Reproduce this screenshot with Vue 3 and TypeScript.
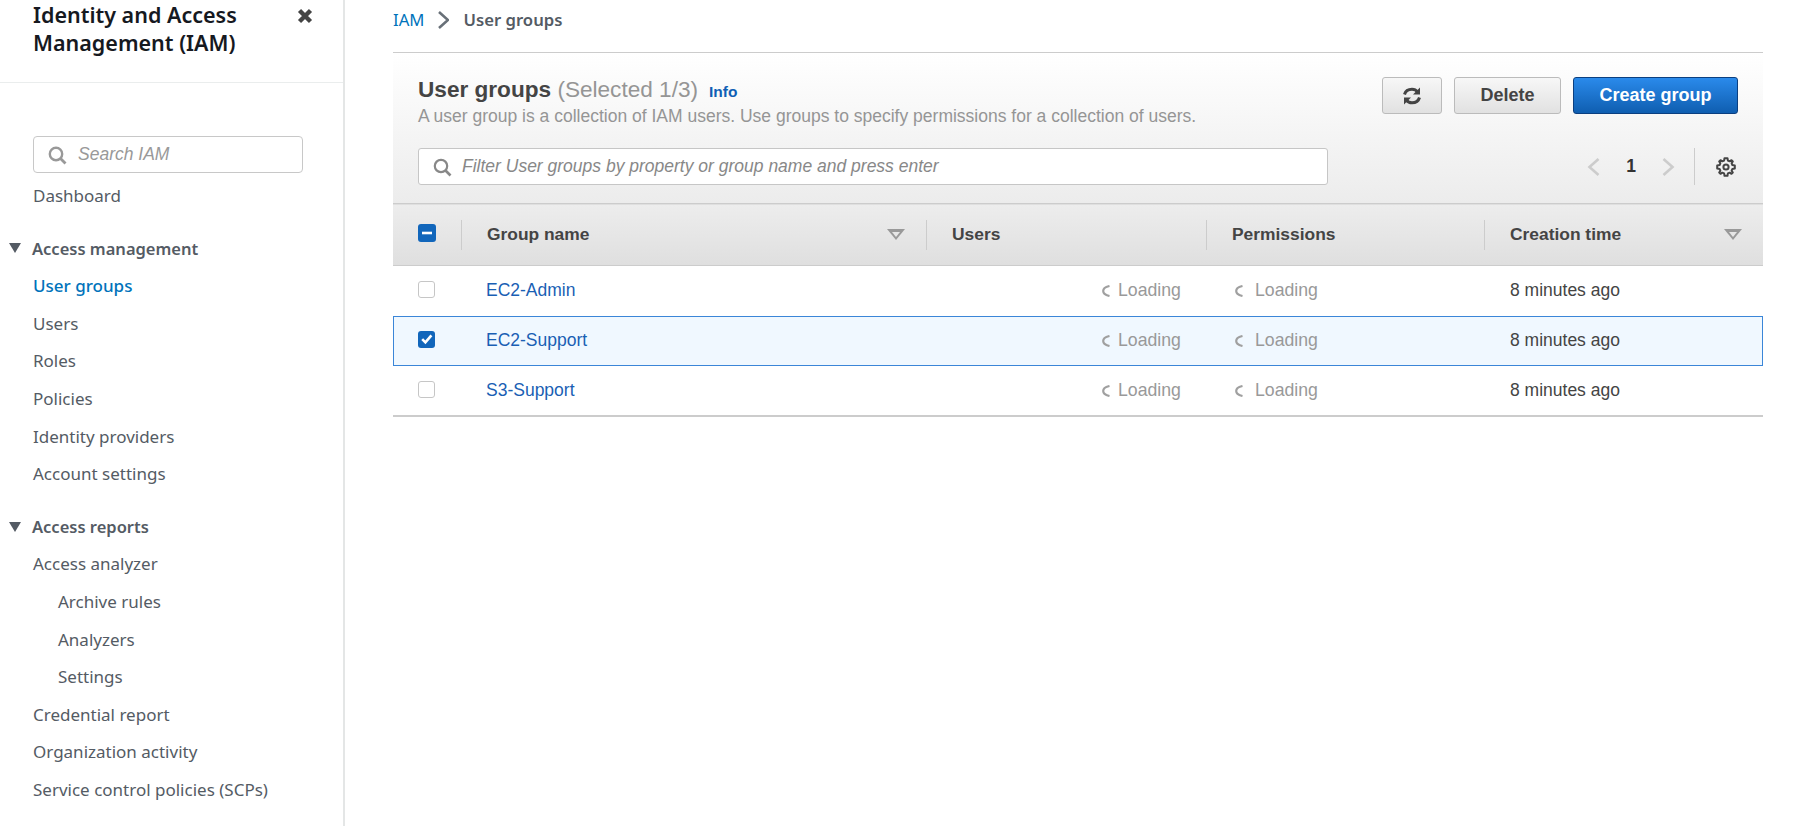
<script setup lang="ts">
interface NavItem {
  label: string
  level?: number
  active?: boolean
}
interface NavSection {
  title: string
  items: NavItem[]
}
const sections: NavSection[] = [
  {
    title: 'Access management',
    items: [
      { label: 'User groups', active: true },
      { label: 'Users' },
      { label: 'Roles' },
      { label: 'Policies' },
      { label: 'Identity providers' },
      { label: 'Account settings' },
    ],
  },
  {
    title: 'Access reports',
    items: [
      { label: 'Access analyzer' },
      { label: 'Archive rules', level: 1 },
      { label: 'Analyzers', level: 1 },
      { label: 'Settings', level: 1 },
      { label: 'Credential report' },
      { label: 'Organization activity' },
      { label: 'Service control policies (SCPs)' },
    ],
  },
]
const groups = [
  { name: 'EC2-Admin', selected: false },
  { name: 'EC2-Support', selected: true },
  { name: 'S3-Support', selected: false },
]
</script>

<template>
  <div class="page">
    <aside class="nav">
      <div class="nav__head">
        <h2 class="nav__title">Identity and Access Management (IAM)</h2>
        <svg class="nav__close" width="18" height="18" viewBox="0 0 18 18">
          <path d="M3.5 3.5l11 11M14.5 3.5l-11 11" stroke="#444" stroke-width="4.4" />
        </svg>
      </div>
      <div class="nav__body">
        <div class="nav__search">
          <svg width="20" height="20" viewBox="0 0 20 20" fill="none" stroke="#999">
            <circle cx="9" cy="9" r="6.2" stroke-width="2.4" />
            <path d="M13.5 13.5l5 5" stroke-width="2.8" />
          </svg>
          <span>Search IAM</span>
        </div>
        <a class="nav__link">Dashboard</a>
        <section v-for="s in sections" :key="s.title" class="nav__section">
          <div class="nav__section-title">
            <i class="nav__caret"></i>
            {{ s.title }}
          </div>
          <a
            v-for="item in s.items"
            :key="item.label"
            class="nav__link"
            :class="{ 'nav__link--active': item.active, 'nav__link--sub': item.level }"
          >{{ item.label }}</a>
        </section>
      </div>
    </aside>

    <main class="main">
      <nav class="crumbs">
        <a>IAM</a>
        <svg width="14" height="20" viewBox="0 0 14 20" fill="none" stroke="#687078" stroke-width="2.6">
          <path d="M4 2l9 8-9 8" />
        </svg>
        <b>User groups</b>
      </nav>

      <div class="panel">
        <div class="panel__top">
          <div class="panel__heading">
            <div class="panel__title">
              <strong>User groups</strong> <span>(Selected 1/3)</span>
              <a class="panel__info">Info</a>
            </div>
            <p>A user group is a collection of IAM users. Use groups to specify permissions for a collection of users.</p>
          </div>
          <div class="panel__actions">
            <button type="button" class="btn btn--icon">
              <svg width="20" height="20" viewBox="0 0 20 20" fill="none" stroke="#444" stroke-width="3">
                <path d="M2.5 8.5C3.5 5 6.5 3.2 10 3.2c2.4 0 4.3 1 5.7 2.8" />
                <path d="M17.5 11.5c-1 3.5-4 5.3-7.5 5.3-2.4 0-4.3-1-5.7-2.8" />
                <path d="M18 1.5v7h-7z" fill="#444" stroke="none" />
                <path d="M2 18.5v-7h7z" fill="#444" stroke="none" />
              </svg>
            </button>
            <button type="button" class="btn">Delete</button>
            <button type="button" class="btn btn--primary">Create group</button>
          </div>
        </div>
        <div class="panel__tools">
          <div class="filter">
            <svg width="20" height="20" viewBox="0 0 20 20" fill="none" stroke="#888">
              <circle cx="9" cy="9" r="6.2" stroke-width="2.2" />
              <path d="M13.5 13.5l5 5" stroke-width="2.6" />
            </svg>
            <span>Filter User groups by property or group name and press enter</span>
          </div>
          <div class="pager">
            <svg width="14" height="20" viewBox="0 0 14 20" fill="none" stroke="#ccc" stroke-width="2.6">
              <path d="M11.5 2l-9 8 9 8" />
            </svg>
            <b>1</b>
            <svg width="14" height="20" viewBox="0 0 14 20" fill="none" stroke="#ccc" stroke-width="2.6">
              <path d="M2.5 2l9 8-9 8" />
            </svg>
            <i class="pager__sep"></i>
            <svg class="pager__gear" width="20" height="20" viewBox="0 0 20 20" fill="none" stroke="#444" stroke-width="2" stroke-linejoin="round">
              <circle cx="10" cy="10" r="2.6" />
              <path d="M8.5 1.2h3l.4 2.4 1.8.75 1.8-1.15 1.3 1.3-1.15 1.8.75 1.8 2.4.4v3l-2.4.4-.75 1.8 1.15 1.8-1.3 1.3-1.8-1.15-1.8.75-.4 2.4h-3l-.4-2.4-1.8-.75-1.8 1.15-1.3-1.3 1.15-1.8-.75-1.8-2.4-.4v-3l2.4-.4.75-1.8-1.15-1.8 1.3-1.3 1.8 1.15 1.8-.75z" />
            </svg>
          </div>
        </div>
      </div>

      <table class="table">
        <colgroup>
          <col class="table__c0" />
          <col class="table__c1" />
          <col class="table__c2" />
          <col class="table__c3" />
          <col />
        </colgroup>
        <thead>
          <tr>
            <th class="table__check">
              <span class="check check--on">
                <svg width="18" height="18" viewBox="0 0 18 18"><path d="M4 9h10" stroke="#fff" stroke-width="2.6" /></svg>
              </span>
            </th>
            <th><span class="th">Group name<i class="sort"></i></span></th>
            <th><span class="th">Users</span></th>
            <th><span class="th">Permissions</span></th>
            <th><span class="th">Creation time<i class="sort"></i></span></th>
          </tr>
        </thead>
        <tbody>
          <tr v-for="g in groups" :key="g.name" :class="{ 'is-selected': g.selected }">
            <td class="table__check">
              <span class="check" :class="{ 'check--on': g.selected }">
                <svg v-if="g.selected" width="18" height="18" viewBox="0 0 18 18" fill="none">
                  <path d="M4.2 9.2l3.2 3.2 6-7" stroke="#fff" stroke-width="2.6" />
                </svg>
              </span>
            </td>
            <td><a class="table__link">{{ g.name }}</a></td>
            <td class="loading loading--users">
              <svg class="moon" width="8" height="12" viewBox="0 0 8 12" fill="none" stroke="#a0a0a0" stroke-width="2.2">
                <path d="M7.5 1C3 2 1.2 4 1.2 6s1.8 4 6.3 5" />
              </svg>Loading
            </td>
            <td class="loading">
              <svg class="moon" width="8" height="12" viewBox="0 0 8 12" fill="none" stroke="#a0a0a0" stroke-width="2.2">
                <path d="M7.5 1C3 2 1.2 4 1.2 6s1.8 4 6.3 5" />
              </svg>Loading
            </td>
            <td class="table__time">8 minutes ago</td>
          </tr>
        </tbody>
      </table>
    </main>
  </div>
</template>

<style scoped>
.page {
  display: flex;
  height: 826px;
  overflow: hidden;
  background: #fff;
  font-family: "Liberation Sans", Arial, sans-serif;
  font-size: 16px;
  color: #444;
}
.nav {
  flex: 0 0 345px;
  box-sizing: border-box;
  border-right: 2px solid #e4e6e6;
  font-family: "Noto Sans", Roboto, sans-serif;
}
.nav__head {
  display: flex;
  justify-content: space-between;
  box-sizing: border-box;
  height: 83px;
  padding: 1px 29px 0 33px;
  border-bottom: 1px solid #eaeded;
}
.nav__title {
  margin: 0;
  width: 240px;
  font-size: 21.5px;
  font-weight: 600;
  line-height: 28px;
  color: #16191f;
}
.nav__close {
  margin: 6px 0 0 0;
}
.nav__body {
  padding-top: 53px;
}
.nav__search {
  display: flex;
  align-items: center;
  gap: 11px;
  box-sizing: border-box;
  height: 37px;
  width: 270px;
  margin: 0 0 4px 33px;
  padding: 0 13px;
  border: 1px solid #c8c8c8;
  border-radius: 4px;
  font-family: "Liberation Sans", Arial, sans-serif;
  font-style: italic;
  font-size: 17.5px;
  color: #999;
}
.nav__link {
  display: block;
  height: 37.6px;
  padding-left: 33px;
  font-size: 17px;
  line-height: 37.6px;
  color: #545b64;
  white-space: nowrap;
}
.nav__link--active {
  font-weight: 500;
  color: #0073bb;
}
.nav__link--sub {
  padding-left: 58px;
}
.nav__section {
  margin-top: 15px;
}
.nav__section-title {
  display: flex;
  align-items: center;
  gap: 11px;
  height: 37.6px;
  padding-left: 9px;
  font-size: 16.5px;
  font-weight: 600;
  color: #545b64;
}
.nav__caret {
  width: 0;
  height: 0;
  border-left: 6.5px solid transparent;
  border-right: 6.5px solid transparent;
  border-top: 10px solid #545b64;
}

.main {
  flex: 1;
  min-width: 0;
  padding: 0 33px 0 48px;
}
.crumbs {
  display: flex;
  align-items: center;
  gap: 11px;
  height: 39px;
  font-family: "Noto Sans", Roboto, sans-serif;
  font-size: 16.7px;
  color: #0073bb;
}
.crumbs b {
  margin-left: 3px;
  font-weight: 600;
  color: #545b64;
}
.panel {
  box-sizing: border-box;
  height: 151px;
  margin-top: 13px;
  padding: 24px 25px 0;
  border-top: 1px solid #ccc;
  background: linear-gradient(#fff, #ececec);
}
.panel__top {
  display: flex;
  justify-content: space-between;
}
.panel__heading p {
  margin: 3px 0 0;
  font-size: 17.5px;
  line-height: 18px;
  color: #959595;
}
.panel__title {
  font-size: 22.6px;
  line-height: 25px;
  color: #959595;
}
.panel__title strong {
  color: #444;
}
.panel__info {
  margin-left: 11px;
  font-size: 15.5px;
  font-weight: 700;
  color: #0f5fb5;
}
.panel__actions {
  display: flex;
  gap: 12px;
}
.btn {
  box-sizing: border-box;
  width: 107px;
  height: 37px;
  padding: 0;
  border: 1px solid #bbb;
  border-radius: 3px;
  background: linear-gradient(#f7f7f7, #e1e1e1);
  font-family: inherit;
  font-size: 18px;
  font-weight: 700;
  color: #444;
}
.btn--icon {
  display: flex;
  align-items: center;
  justify-content: center;
  width: 60px;
}
.btn--primary {
  width: 165px;
  border-color: #0b3f80;
  background: linear-gradient(#2a8aeb, #0f5eb0);
  color: #fff;
}
.panel__tools {
  display: flex;
  align-items: center;
  justify-content: space-between;
  margin-top: 23px;
}
.filter {
  display: flex;
  align-items: center;
  gap: 10px;
  box-sizing: border-box;
  width: 910px;
  height: 37px;
  padding: 0 13px;
  border: 1px solid #c6c6c6;
  border-radius: 3px;
  background: #fff;
  font-style: italic;
  font-size: 17.5px;
  color: #888;
}
.pager {
  display: flex;
  align-items: center;
  height: 37px;
  font-size: 17.5px;
}
.pager b {
  width: 60px;
  text-align: center;
  color: #333;
}
.pager__sep {
  width: 1px;
  height: 37px;
  margin: 0 21px 0 19px;
  background: #ccc;
}
.pager__gear {
  margin-right: 2px;
}

.table {
  width: 100%;
  table-layout: fixed;
  border-collapse: collapse;
}
.table__c0 {
  width: 68px;
}
.table__c1 {
  width: 465px;
}
.table__c2 {
  width: 280px;
}
.table__c3 {
  width: 278px;
}
.table thead tr {
  height: 62px;
  border-top: 1px solid #ccc;
  border-bottom: 1px solid #ccc;
  background: linear-gradient(#ededed, #dfdfdf);
}
.table th {
  padding: 0;
  text-align: left;
  font-size: 17.4px;
  font-weight: 700;
  color: #444;
}
.th {
  display: flex;
  align-items: center;
  justify-content: space-between;
  box-sizing: border-box;
  height: 30px;
  padding: 0 21px 0 25px;
  border-left: 1px solid #ccc;
}
.sort {
  position: relative;
  width: 0;
  height: 0;
  border-left: 9px solid transparent;
  border-right: 9px solid transparent;
  border-top: 11px solid #999;
}
.sort::after {
  content: "";
  position: absolute;
  left: -4px;
  top: -8.5px;
  border-left: 4px solid transparent;
  border-right: 4px solid transparent;
  border-top: 5px solid #e6e6e6;
}
.table tbody tr {
  height: 50px;
}
.table tbody tr.is-selected {
  outline: 1px solid #3b86d8;
  outline-offset: -1px;
  background: #f0f8ff;
}
.table tbody:last-child tr:last-child {
  border-bottom: 2px solid #ccc;
}
.table td {
  padding: 0;
  font-size: 17.5px;
}
.table tbody tr:last-child td {
  padding-top: 1px;
}
.table__check {
  padding-left: 25px !important;
  line-height: 0;
}
.table td:nth-child(2) {
  padding-left: 25px;
}
.check {
  display: inline-flex;
  box-sizing: border-box;
  width: 17px;
  height: 17px;
  margin-bottom: 3px;
  border: 1px solid #c6c6c6;
  border-radius: 3px;
  background: #fff;
}
.check--on {
  border: none;
  background: #1166bb;
}
.check svg {
  margin: -0.5px;
}
th .check {
  width: 18px;
  height: 18px;
}
.table__link {
  color: #1a5fb4;
}
.table td.loading {
  padding-left: 29px;
  font-size: 17.7px;
  color: #999;
}
.table td.loading--users {
  padding-left: 176px;
}
.moon {
  margin-right: 12px;
  vertical-align: -1px;
}
.loading--users .moon {
  margin-right: 8px;
}
.table__time {
  padding-left: 26px !important;
  color: #444;
}
</style>
